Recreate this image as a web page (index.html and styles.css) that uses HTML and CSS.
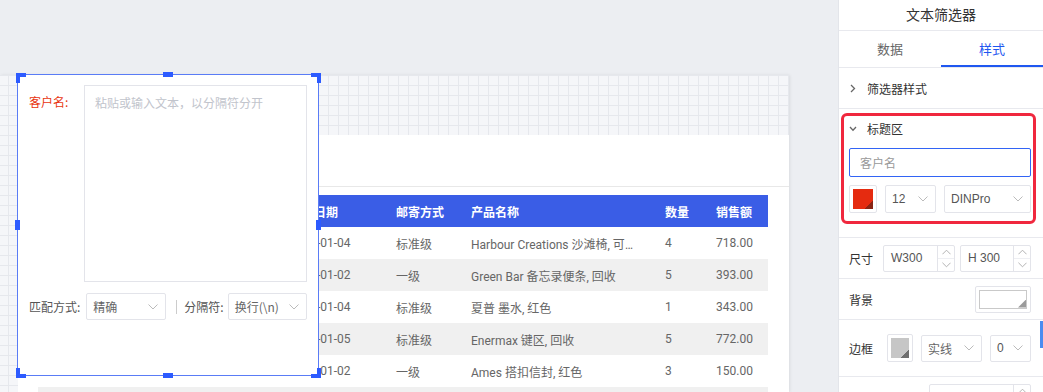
FILE: index.html
```html
<!DOCTYPE html>
<html>
<head>
  <meta charset="utf-8">
  <link rel="stylesheet" href="styles.css">
</head>
<body>
<div class="app">
  <div class="canvas">
    <div class="board">
      <div class="report">
        <div class="report-head"></div>
        <table class="sheet">
          <colgroup>
            <col style="width:120px"><col style="width:122px"><col style="width:106px"><col style="width:75px">
            <col style="width:194px"><col style="width:51px"><col style="width:62px">
          </colgroup>
          <thead>
            <tr><th></th><th></th><th>订单日期</th><th>邮寄方式</th><th>产品名称</th><th>数量</th><th>销售额</th></tr>
          </thead>
          <tbody>
            <tr><td></td><td></td><td>2019-01-04</td><td>标准级</td><td class="prod">Harbour Creations 沙滩椅, 可调节</td><td>4</td><td>718.00</td></tr>
            <tr><td></td><td></td><td>2019-01-02</td><td>一级</td><td class="prod">Green Bar 备忘录便条, 回收</td><td>5</td><td>393.00</td></tr>
            <tr><td></td><td></td><td>2019-01-04</td><td>标准级</td><td class="prod">夏普 墨水, 红色</td><td>1</td><td>343.00</td></tr>
            <tr><td></td><td></td><td>2019-01-05</td><td>标准级</td><td class="prod">Enermax 键区, 回收</td><td>5</td><td>772.00</td></tr>
            <tr><td></td><td></td><td>2019-01-02</td><td>一级</td><td class="prod">Ames 搭扣信封, 红色</td><td>3</td><td>150.00</td></tr>
            <tr><td></td><td></td><td></td><td></td><td class="prod"></td><td></td><td></td></tr>
          </tbody>
        </table>
      </div>
    </div>

    <!-- selected text filter widget -->
    <div class="filter-box">
      <div class="fb-main">
        <span class="fb-label">客户名:</span>
        <div class="fb-text">粘贴或输入文本，以分隔符分开</div>
      </div>
      <div class="fb-opts">
        <span class="fb-name">匹配方式:</span>
        <div class="pick pick-match">精确<svg width="10" height="6" viewBox="0 0 10 6"><path d="M.5.5 5 5 9.5.5" fill="none" stroke="#bbb"/></svg></div>
        <span class="fb-bar"></span>
        <span class="fb-name">分隔符:</span>
        <div class="pick pick-sep">换行(\n)<svg width="10" height="6" viewBox="0 0 10 6"><path d="M.5.5 5 5 9.5.5" fill="none" stroke="#bbb"/></svg></div>
      </div>
      <i class="hd hd-tl"></i><i class="hd hd-tr"></i><i class="hd hd-bl"></i><i class="hd hd-br"></i>
      <i class="hm hm-t"></i><i class="hm hm-b"></i><i class="hm hm-l"></i><i class="hm hm-r"></i>
    </div>
  </div>

  <div class="side">
    <div class="side-title">文本筛选器</div>
    <div class="tabs">
      <div class="tab">数据</div>
      <div class="tab on">样式</div>
    </div>

    <div class="fold">
      <svg width="6" height="9" viewBox="0 0 6 9"><path d="M1 1l3.5 3.5L1 8" fill="none" stroke="#666" stroke-width="1.3"/></svg>
      <span class="fold-text">筛选器样式</span>
    </div>

    <div class="sect">
      <div class="sect-head">
        <svg width="8" height="6" viewBox="0 0 8 6"><path d="M1 1l3 3.2L7 1" fill="none" stroke="#666" stroke-width="1.3"/></svg>
        <span class="fold-text">标题区</span>
      </div>
      <div class="field">客户名</div>
      <div class="tools">
        <div class="swatch"><i class="sw-red"></i></div>
        <div class="pick pick-size">12<svg width="10" height="6" viewBox="0 0 10 6"><path d="M.5.5 5 5 9.5.5" fill="none" stroke="#bbb"/></svg></div>
        <div class="pick pick-face">DINPro<svg width="10" height="6" viewBox="0 0 10 6"><path d="M.5.5 5 5 9.5.5" fill="none" stroke="#bbb"/></svg></div>
      </div>
    </div>

    <div class="prop">
      <span class="prop-label w34">尺寸</span>
      <div class="num num-w">
        <span class="num-val">W300</span>
        <div class="spin">
          <span><svg width="10" height="6" viewBox="0 0 10 6"><path d="M.5 5.5 5 1l4.5 4.5" fill="none" stroke="#aaa"/></svg></span>
          <span><svg width="10" height="6" viewBox="0 0 10 6"><path d="M.5.5 5 5 9.5.5" fill="none" stroke="#aaa"/></svg></span>
        </div>
      </div>
      <div class="num num-h">
        <span class="num-val">H 300</span>
        <div class="spin">
          <span><svg width="10" height="6" viewBox="0 0 10 6"><path d="M.5 5.5 5 1l4.5 4.5" fill="none" stroke="#aaa"/></svg></span>
          <span><svg width="10" height="6" viewBox="0 0 10 6"><path d="M.5.5 5 5 9.5.5" fill="none" stroke="#aaa"/></svg></span>
        </div>
      </div>
    </div>

    <div class="prop">
      <span class="prop-label">背景</span>
      <div class="bg-pick"><i></i></div>
    </div>

    <div class="prop prop-tall">
      <span class="prop-label w38">边框</span>
      <div class="swatch swatch-sm"><i class="sw-grey"></i></div>
      <div class="pick pick-line">实线<svg width="10" height="6" viewBox="0 0 10 6"><path d="M.5.5 5 5 9.5.5" fill="none" stroke="#bbb"/></svg></div>
      <div class="pick pick-width">0<svg width="10" height="6" viewBox="0 0 10 6"><path d="M.5.5 5 5 9.5.5" fill="none" stroke="#bbb"/></svg></div>
    </div>

    <div class="prop">
      <span class="prop-label w80">圆角</span>
      <div class="num num-r">
        <span class="num-val"></span>
        <div class="spin">
          <span><svg width="10" height="6" viewBox="0 0 10 6"><path d="M.5 5.5 5 1l4.5 4.5" fill="none" stroke="#aaa"/></svg></span>
          <span><svg width="10" height="6" viewBox="0 0 10 6"><path d="M.5.5 5 5 9.5.5" fill="none" stroke="#aaa"/></svg></span>
        </div>
      </div>
    </div>

    <div class="mark"></div>
    <div class="thumb"></div>
  </div>
</div>
</body>
</html>
```

FILE: styles.css
```css
* {
  box-sizing: border-box;
}
body {
  margin: 0;
  width: 1043px;
  height: 392px;
  overflow: hidden;
  background: #eceef2;
  font-family: "Noto Sans CJK SC", sans-serif;
  font-size: 12px;
  color: #333;
}
.app {
  display: flex;
  height: 392px;
}

/* canvas */
.canvas {
  position: relative;
  width: 838px;
  height: 392px;
  padding-top: 75px;
  overflow: hidden;
  background: #eceef2;
}
.board {
  width: 789px;
  height: 317px;
  padding-top: 60px;
  background-color: #f5f6f9;
  background-image: linear-gradient(90deg, #e6e8ed 1px, transparent 1px), linear-gradient(#e6e8ed 1px, transparent 1px);
  background-size: 10px 10px;
  background-position: 8px 0, 0 0;
  box-shadow: 1px 0 3px rgba(0, 0, 0, .08);
}
.report {
  margin-left: 18px;
  width: 771px;
  height: 257px;
  background: #fff;
}
.report-head {
  height: 52px;
  border-bottom: 1px solid #e8e8e8;
}
.sheet {
  margin: 8px 0 0 20px;
  width: 730px;
  border-collapse: collapse;
  table-layout: fixed;
  font-family: Roboto, "Noto Sans CJK SC", sans-serif;
  font-size: 12px;
  color: #666;
}
.sheet th {
  height: 32px;
  padding: 0 0 0 10px;
  background: #3a5de6;
  color: #fff;
  font-weight: bold;
  text-align: left;
}
.sheet td {
  height: 32px;
  padding: 0 10px;
  white-space: nowrap;
  overflow: hidden;
  text-overflow: ellipsis;
}
.sheet td.prod {
  padding-right: 20px;
}
.sheet tbody tr:nth-child(even) td {
  background: #f0f0f0;
}

/* filter widget */
.filter-box {
  position: absolute;
  left: 17px;
  top: 74px;
  width: 302px;
  height: 302px;
  padding: 10px 11px 0 11px;
  border: 1px solid #5a7cf6;
  background: #fff;
}
.fb-main {
  display: flex;
}
.fb-label {
  width: 55px;
  flex-shrink: 0;
  padding-top: 8px;
  line-height: 18px;
  color: #e8340f;
}
.fb-text {
  flex: 1;
  height: 197px;
  padding: 8px 10px;
  border: 1px solid #e3e4ea;
  line-height: 18px;
  color: #c1c4cc;
}
.fb-opts {
  display: flex;
  align-items: center;
  height: 27px;
  margin-top: 11px;
  color: #555;
}
.fb-name {
  flex-shrink: 0;
  white-space: nowrap;
}
.fb-bar {
  flex-shrink: 0;
  width: 1px;
  height: 14px;
  margin: 0 7px 0 10px;
  background: #ccc;
}
.pick {
  display: flex;
  flex-shrink: 0;
  align-items: center;
  justify-content: space-between;
  height: 27px;
  padding: 0 7px 0 6px;
  border: 1px solid #e3e4ea;
  border-radius: 2px;
  color: #666;
  white-space: nowrap;
}
.pick-match {
  width: 80px;
  margin-left: 6px;
}
.pick-sep {
  width: 79px;
  margin-left: 4px;
}
.hd {
  position: absolute;
  width: 10px;
  height: 10px;
  border: 0 solid #2d5bff;
}
.hd-tl { left: -2px; top: -2px; border-top-width: 4px; border-left-width: 4px; }
.hd-tr { right: -3px; top: -2px; border-top-width: 4px; border-right-width: 4px; }
.hd-bl { left: -2px; bottom: -3px; border-bottom-width: 4px; border-left-width: 4px; }
.hd-br { right: -3px; bottom: -3px; border-bottom-width: 4px; border-right-width: 4px; }
.hm {
  position: absolute;
  background: #2d5bff;
}
.hm-t { left: 145px; top: -3px; width: 10px; height: 5px; }
.hm-b { left: 145px; bottom: -3px; width: 10px; height: 5px; }
.hm-l { left: -3px; top: 145px; width: 5px; height: 10px; }
.hm-r { right: -3px; top: 145px; width: 5px; height: 10px; }

/* side panel */
.side {
  position: relative;
  width: 205px;
  height: 392px;
  overflow: hidden;
  background: #fff;
  border-left: 1px solid #e3e5ea;
}
.side-title {
  height: 31px;
  padding-top: 5px;
  line-height: 18px;
  text-align: center;
  font-size: 14px;
  border-bottom: 1px solid #e8e9ee;
}
.tabs {
  display: flex;
  height: 37px;
  border-bottom: 1px solid #e8e9ee;
}
.tab {
  position: relative;
  flex: 1;
  line-height: 36px;
  text-align: center;
  font-size: 13px;
  color: #666;
}
.tab.on {
  color: #1f57f0;
}
.tab.on::after {
  content: "";
  position: absolute;
  left: 0;
  right: 0;
  bottom: 0;
  height: 2px;
  background: #1f57f0;
}
.fold {
  display: flex;
  align-items: center;
  height: 41px;
  padding-left: 11px;
  border-bottom: 1px solid #e8e9ee;
}
.fold-text {
  margin-left: 11px;
}
.sect {
  padding: 0 12px 24px 10px;
  border-bottom: 1px solid #e8e9ee;
}
.sect-head {
  display: flex;
  align-items: center;
  height: 39px;
}
.sect-head .fold-text {
  margin-left: 10px;
}
.field {
  height: 29px;
  padding-left: 10px;
  border: 1px solid #3264f5;
  border-radius: 2px;
  line-height: 27px;
  color: #999;
}
.tools {
  display: flex;
  height: 28px;
  margin-top: 8px;
}
.swatch {
  flex-shrink: 0;
  width: 28px;
  height: 28px;
  padding: 3px;
  border: 1px solid #e3e4ea;
  border-radius: 2px;
}
.swatch i {
  display: block;
  width: 100%;
  height: 100%;
}
.sw-red {
  background: linear-gradient(135deg, #e52b10 80%, #8a2414 80%);
}
.sw-grey {
  background: linear-gradient(135deg, #c6c6c6 78%, #6e6e6e 78%);
}
.pick-size,
.pick-face,
.pick-width {
  font-family: "Liberation Sans", "Noto Sans CJK SC", sans-serif;
  font-size: 12px;
  color: #555;
}
.pick-size {
  width: 51px;
  height: 28px;
  margin-left: 8px;
}
.pick-face {
  flex: 1;
  height: 28px;
  margin-left: 8px;
}
.prop {
  display: flex;
  align-items: center;
  height: 41px;
  padding: 0 12px 0 10px;
  border-bottom: 1px solid #e8e9ee;
}
.prop-tall {
  height: 57px;
}
.prop-label {
  flex-shrink: 0;
  white-space: nowrap;
}
.w34 { width: 34px; }
.w38 { width: 38px; }
.w80 { width: 80px; }
.num {
  display: flex;
  height: 27px;
  border: 1px solid #e3e4ea;
  border-radius: 2px;
  font-family: "Liberation Sans", sans-serif;
  font-size: 12px;
  color: #555;
}
.num-w { width: 72px; }
.num-h { width: 71px; margin-left: 5px; }
.num-r { flex: 1; }
.num-val {
  flex: 1;
  padding-left: 7px;
  line-height: 25px;
}
.spin {
  display: flex;
  flex-direction: column;
  width: 17px;
  border-left: 1px solid #e3e4ea;
}
.spin span {
  flex: 1;
  display: flex;
  align-items: center;
  justify-content: center;
}
.spin span + span {
  border-top: 1px solid #eeeff3;
}
.spin svg {
  width: 9px;
}
.bg-pick {
  width: 56px;
  height: 27px;
  margin-left: auto;
  padding: 3px;
  border: 1px solid #e3e4ea;
  border-radius: 2px;
}
.bg-pick i {
  position: relative;
  display: block;
  height: 100%;
  border: 1px solid #c9c9c9;
}
.bg-pick i::after {
  content: "";
  position: absolute;
  right: 0;
  bottom: 0;
  width: 8px;
  height: 8px;
  background: #9a9a9a;
  clip-path: polygon(100% 0, 100% 100%, 0 100%);
}
.swatch-sm {
  width: 26px;
}
.pick-line {
  width: 61px;
  margin-left: 8px;
}
.pick-width {
  width: 41px;
  margin-left: 8px;
}
.mark {
  position: absolute;
  left: 2px;
  top: 113px;
  width: 195px;
  height: 111px;
  border: 3px solid #f0283e;
  border-radius: 6px;
}
.thumb {
  position: absolute;
  right: 0;
  top: 321px;
  width: 3px;
  height: 27px;
  background: #4a8cf0;
}
```
